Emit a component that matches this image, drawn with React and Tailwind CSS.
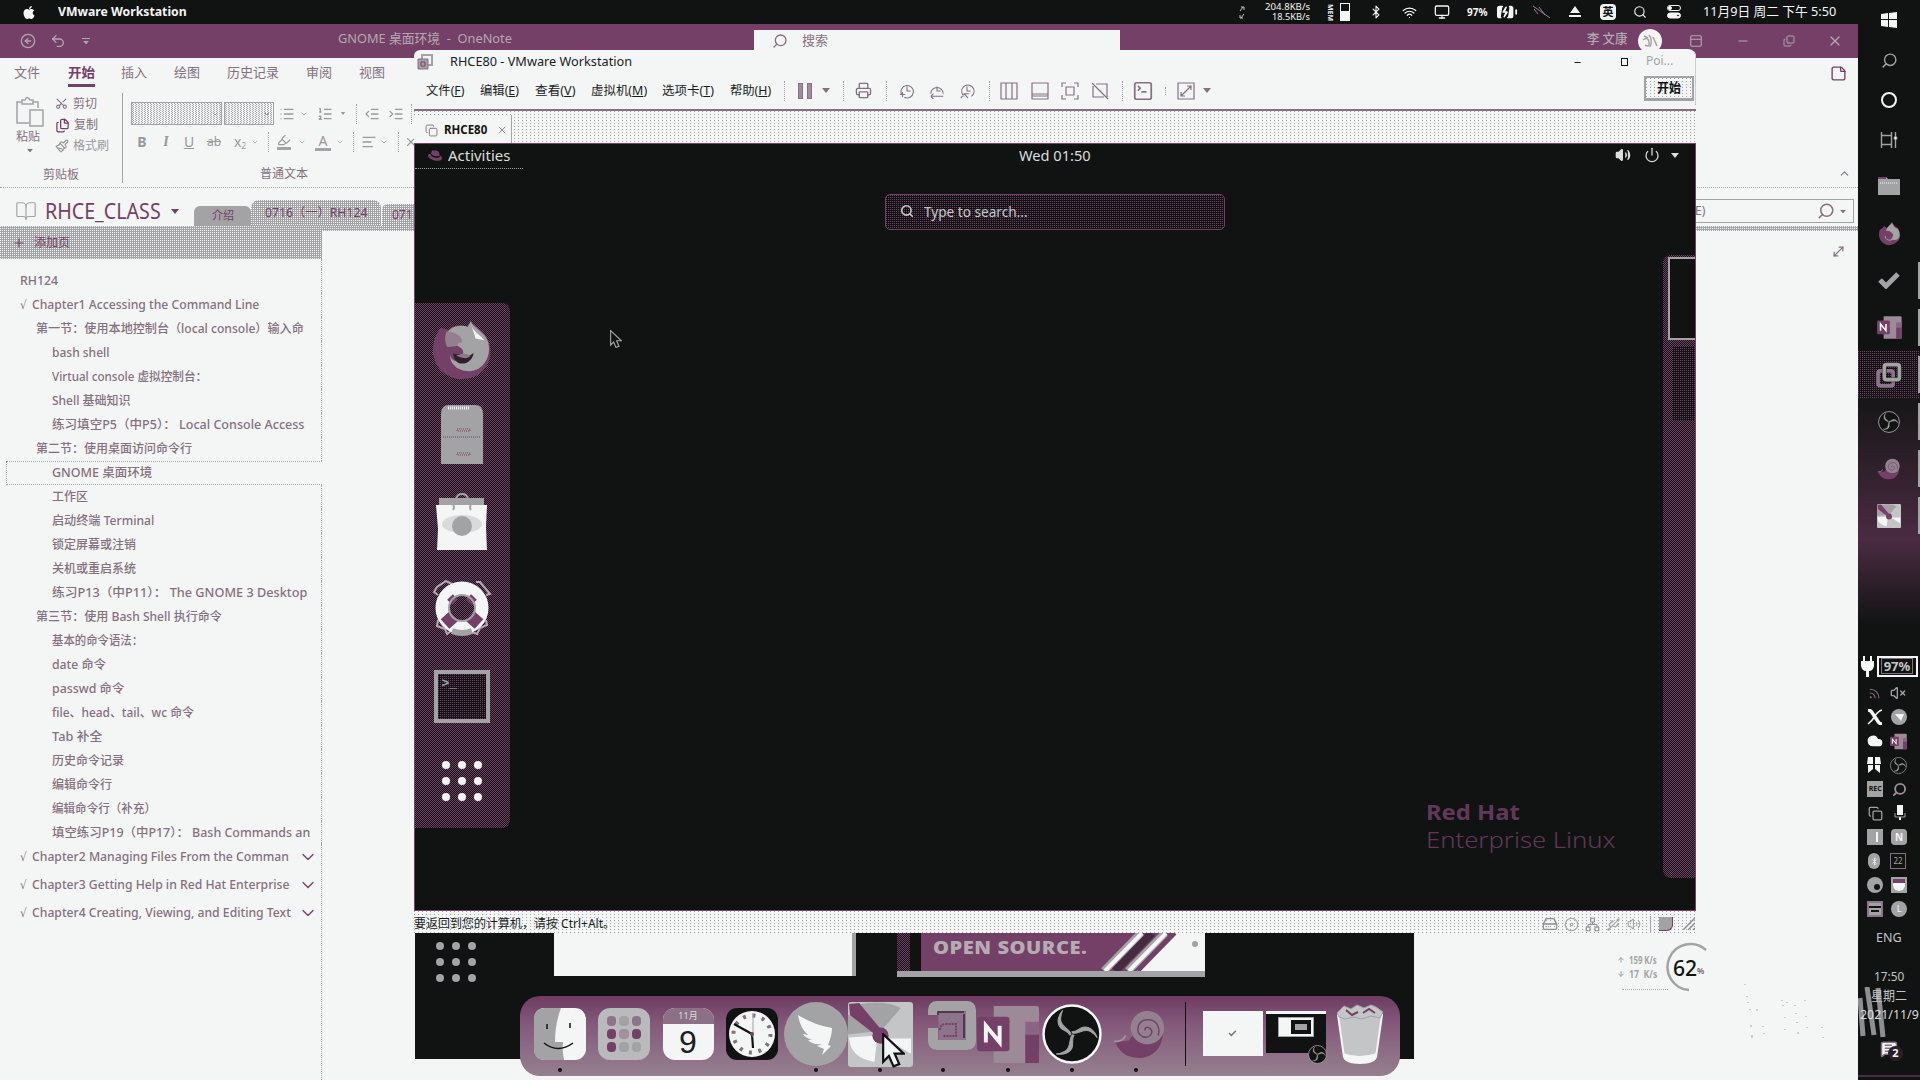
import React, { useLayoutEffect, useRef } from "react";
import {
  Search, Undo2, Scissors, Files, Paintbrush, Bluetooth, Wifi, Monitor, List, ListOrdered,
  IndentDecrease, IndentIncrease, AlignLeft, Highlighter, BookOpen, ChevronDown, ChevronUp, Plus, X,
  Minus, Copy, MoveDiagonal, Printer,
  SquareTerminal, Volume2, VolumeX, Power, Check, StickyNote, HardDrive, Disc, Network, Usb, Cloud,
  MessageSquareText, CircleArrowLeft, BatteryCharging, ArrowUp, ArrowDown, PanelTop, Rss,
} from "lucide-react";
import { FaApple, FaRedhat } from "react-icons/fa";

const lightDots = "bg-[#f4f6f5] bg-[conic-gradient(from_270deg_at_1px_1px,#a3a3a5_25%,transparent_0)] bg-size-[4px_3px]";
const fieldDots = "bg-[#f4f6f5] bg-[conic-gradient(from_270deg_at_1px_1px,#a3a3a5_25%,transparent_0),conic-gradient(from_270deg_at_1px_1px,#a3a3a5_25%,transparent_0)] bg-size-[3px_2px] bg-position-[0_0,1px_1px]";
const greyDots = "bg-[#a3a3a5] bg-[conic-gradient(from_270deg_at_1px_1px,#f4f6f5_25%,transparent_0)] bg-size-[2px_2px]";
const plumDots = "bg-[#101312] bg-[conic-gradient(from_270deg_at_1px_1px,#754067_25%,transparent_0),conic-gradient(from_270deg_at_1px_1px,#754067_25%,transparent_0)] bg-size-[2px_2px] bg-position-[0_0,1px_1px]";
const plumSparse = "bg-[#101312] bg-[conic-gradient(from_270deg_at_1px_1px,#754067_25%,transparent_0)] bg-size-[2px_2px]";

// Text squeezed or stretched horizontally to a known width.
function T({ w, children, className = "" }) {
  const inner = useRef(null);
  useLayoutEffect(() => {
    const el = inner.current;
    el.style.transform = `scaleX(${w / el.offsetWidth})`;
  }, [w]);
  return (
    <span className={`block shrink-0 whitespace-pre ${className}`} style={{ width: w }}>
      <span ref={inner} className="inline-block origin-left">{children}</span>
    </span>
  );
}

// A flex row whose cells are [centre, width, content].
function Row({ items, start = 0, className = "" }) {
  let x = start;
  return (
    <div className={`flex items-center ${className}`}>
      {items.map(([c, w, node], i) => {
        const ml = c - w / 2 - x;
        x = c + w / 2;
        return (
          <div key={i} className="flex shrink-0 items-center justify-center" style={{ width: w, marginLeft: ml }}>
            {node}
          </div>
        );
      })}
    </div>
  );
}

const txt = (a, b, s, cls = "") => [(a + b) / 2, b - a, <T w={b - a} className={cls}>{s}</T>];
const ic = (c, I, s = 16, cls = "") => [c, s, <I size={s} strokeWidth={1.9} className={`shrink-0 ${cls}`} />];
const svg = (c, s, d, cls = "text-[#857080]") => [c, s, <svg width={s} height={s} viewBox="0 0 18 18" fill="none" stroke="currentColor" strokeWidth="1.2" className={cls}><path d={d} /></svg>];
const Caret = ({ className = "" }) => (
  <svg width="8" height="5" viewBox="0 0 8 5" className={className} fill="currentColor"><path d="M0 0h8L4 5z" /></svg>
);
const Sep = ({ className = "h-5" }) => <i className={`block border-l border-dotted border-[#a3a3a5] ${className}`} />;

const Obs = ({ s, ring = "#f4f6f5" }) => (
  <svg width={s} height={s} viewBox="0 0 58 58">
    <circle cx="29" cy="29" r="27.5" fill="#101312" stroke={ring} strokeWidth="2.4" />
    {[0, 120, 240].map((r) => (
      <g key={r} transform={`rotate(${r} 29 29)`}>
        <path d="M28 29C27 24 18 22 18 15c0-4 1-7 2-9-5 6-6 13-2 17 3 3 7 3 9 7z" fill="#a3a3a5" stroke="#a3a3a5" />
      </g>
    ))}
  </svg>
);
const VmIcon = ({ s }) => (
  <svg width={s} height={s} viewBox="0 0 50 50" fill="none">
    <rect x="4" y="17" width="29" height="29" rx="4" stroke="#8c748a" strokeWidth="7" />
    <rect x="16" y="5" width="29" height="29" rx="4" stroke="#101312" strokeWidth="10" opacity=".55" />
    <rect x="16" y="5" width="29" height="29" rx="4" stroke="#a3a3a5" strokeWidth="7" />
  </svg>
);
const VmDockIcon = () => (
  <svg width="49" height="50" viewBox="0 0 49 50" fill="none">
    <path d="M10 14V12q0-2 2-2h24q2 0 2 2v27H11V28" fill="#8c748a" />
    <path d="M5 14V9q0-4 4-4h30q4 0 4 4v31q0 4-4 4H9q-4 0-4-4V27" stroke="#a3a3a5" strokeWidth="10" />
    <path d="M10 14V11h26M36 13v24" stroke="#3c2637" strokeWidth="1.5" />
    <path d="M12 29q0-6 6-6h10v12H15" stroke="#754067" strokeWidth="2" strokeDasharray="2 1" />
  </svg>
);
const OneNote = ({ s }) => (
  <svg width={s} height={s} viewBox="0 0 64 60">
    <path d="M17 1h43a3 3 0 0 1 3 3v52a3 3 0 0 1-3 3H17z" fill="#9c8a99" />
    <path d="M49 17h14v13H49z" fill="#8c6584" /><path d="M49 30h14v29H49z" fill="#754067" />
    <rect x="0" y="12" width="33" height="35" rx="3" fill="#754067" />
    <path d="M9 38V21l14 17V21" stroke="#f4f6f5" strokeWidth="4" fill="none" />
  </svg>
);
const Snail = ({ s }) => (
  <svg width={s} height={s} viewBox="0 0 56 52" fill="none">
    <path d="M3 34C9 47 18 50 29 50c15-1 25-14 22-30l-10 8-8 5q-4 2-8-2l-3-5-5 6z" fill="#754067" />
    <circle cx="36" cy="19" r="17" fill="#94818f" />
    <path d="M47 27c3-11-4-17-12-16-9 1-12 13-4 17 7 3 12-4 8-8-3-3-7 0-5 2" stroke="#754067" strokeWidth="1.5" />
    <path d="M2 33q8 1 12-6" stroke="#a0909d" strokeWidth="2" />
  </svg>
);
const Pinwheel = ({ s }) => (
  <svg width={s} height={s} viewBox="0 0 64 64">
    <rect width="64" height="64" rx="3" fill="#c4c5c6" />
    <path d="M12 2Q38-2 52 6L33 28z" fill="#a3a3a5" /><path d="M0 12v20l26-3z" fill="#a3a3a5" />
    <path d="M1 2l10-1 24 29-7 3L2 13z" fill="#754067" />
    <path d="M1 35l28-2-3 26q-24-4-25-24zM37 36h25v15z" fill="#f4f6f5" />
    <circle cx="32" cy="33" r="8" fill="#754067" />
  </svg>
);
const FoxGlobe = ({ s }) => (
  <svg width={s} height={s} viewBox="0 0 60 62" className="shrink-0">
    <path d="M8 8c-9 12-11 28-3 40 10 15 34 18 47 4C64 38 60 19 49 10L39 2l-3 5c-7-3-16-2-20 3z" fill="#754067" />
    <path d="M39 1l-3 6c-10-3-20 1-22 8 7 0 14 4 10 11 10 4 9 10 2 16-6 2-9-5-8-7-2 10 8 18 19 18 15 0 24-16 20-30C54 12 42 9 39 1z" fill="#a3a3a5" />
    <path d="M39 3c1 8 10 12 14 18l-9-2z" fill="#f4f6f5" />
    <path d="M21 34c5 3 8 0 13 2 4 2 6-1 8-2-1 7-6 11-12 11-5 0-9-4-9-11z" fill="#30202d" />
    <path d="M24 37q8-4 15 0-4 5-15 0z" fill="#8f7a8b" />
    <path d="M14 12c-2 5-2 12 1 16l8-1q3 0 3-3l4-1q0-6-5-8-4-3-11-3z" fill="#93808f" />
  </svg>
);
const Win = () => (
  <svg width="18" height="18" viewBox="0 0 18 18" fill="#f4f6f5"><path d="M1 3l7-1v6H1zM9 2l8-1v7H9zM1 9h7v7l-7-1zM9 9h8v8l-8-1z" /></svg>
);
const Pointer = ({ s, fill, stroke }) => (
  <svg width={s} height={s * 1.5} viewBox="0 0 20 30" fill={fill} stroke={stroke} strokeWidth="1.9"><path d="M1 1v24l5-5 4 9 5-2-4-9h8z" /></svg>
);

function MenuBar() {
  return (
    <Row
      className="h-6 w-[1858px] bg-[#101312] text-[13px] text-[#f4f6f5]"
      items={[
        [29, 14, <FaApple size={15} />],
        txt(58, 187, "VMware Workstation", "font-bold"),
        [1242, 6, <svg width="6" height="13" viewBox="0 0 6 13" stroke="#c4c5c6" fill="none"><path d="M1 5l3-4M2 1h3v3M5 8l-3 4M1 9v3h3" /></svg>],
        [1287, 46, <span className="flex w-full flex-col items-end text-[9px] leading-[10px]"><T w={45}>204.8KB/s</T><T w={38}>18.5KB/s</T></span>],
        [1331, 6, <span className="rotate-90 text-[7px] leading-none font-bold">MEM</span>],
        [1345, 10, <span className="flex h-[18px] w-[10px] flex-col justify-end border border-[#f4f6f5]"><i className="block h-[9px] bg-[#f4f6f5]" /></span>],
        ic(1376, Bluetooth, 14),
        ic(1409, Wifi, 15),
        ic(1442, Monitor, 16),
        txt(1467, 1488, "97%", "text-[11px] font-bold"),
        ic(1507, BatteryCharging, 22, "fill-[#f4f6f5]"),
        [1542, 18, <svg width="18" height="14" viewBox="0 0 18 14"><path d="M1 4l4 5M6 2l6 8M0 1l17 12" stroke="#a07e99" /></svg>],
        [1575, 12, <svg width="12" height="12" viewBox="0 0 12 12" fill="#f4f6f5"><path d="M6 0l5 7H1zM0 9h12v2H0z" /></svg>],
        [1608, 16, <span className="flex size-4 items-center justify-center rounded-sm bg-[#f4f6f5] text-[11px] font-bold text-[#101312]">英</span>],
        ic(1640, Search, 14),
        [1674, 14, <svg width="14" height="14" viewBox="0 0 14 14" fill="none" stroke="#f4f6f5"><rect x=".5" y=".5" width="13" height="5" rx="2.5" /><circle cx="3" cy="3" r="1.5" fill="#f4f6f5" /><rect x=".5" y="8" width="13" height="5" rx="2.5" fill="#f4f6f5" /><circle cx="11" cy="10.5" r="1.3" fill="#101312" /></svg>],
        txt(1703, 1836, "11月9日 周二 下午 5:50", "text-[13px]"),
      ]}
    />
  );
}

function Ribbon() {
  const g = "text-[#9a989b]";
  return (
    <div className="h-[130px] border-b border-dotted border-[#a3a3a5] bg-[#f4f6f5] text-[12px]">
      <Row className="h-[30px] text-[13px] text-[#857080]" items={[
        txt(14, 40, "文件"), txt(68, 95, "开始", "font-bold text-[#754067]"), txt(121, 147, "插入"), txt(174, 200, "绘图"),
        txt(227, 279, "历史记录"), txt(306, 332, "审阅"), txt(359, 385, "视图"), ic(1838, StickyNote, 17, "text-[#754067]"),
      ]} />
      <div className="-mt-1 ml-[68px] h-[3px] w-[27px] bg-[#754067]" />
      <div className="mt-1.5 flex h-[90px]">
        <div className="flex w-[55px] flex-col items-center pt-[3px] pl-[5px] text-[#857080]">
          <svg width="28" height="31" viewBox="0 0 28 31" fill="none" stroke="#a3a3a5" strokeWidth="1.5" className="shrink-0"><path d="M13 27H1V6h5M17 6h5v6M6 8V4h3q2-5 5 0h3v4z" /><path d="M14 14h13v16H14z" /></svg>
          <T w={24} className="mt-0.5 -ml-1 leading-[15px]">粘贴</T><Caret className="mt-1 scale-75" />
        </div>
        <div className="flex w-[68px] flex-col border-r border-[#a3a3a5] text-[#857080]">
          <div className="flex h-[22px] items-center gap-[5px]"><Scissors size={13} className="-rotate-90" /><T w={24}>剪切</T></div>
          <div className="flex h-[23px] items-center gap-[4px]"><Files size={15} className="text-[#754067]" /><T w={24}>复制</T></div>
          <div className={`flex h-[22px] items-center gap-[4px] ${g}`}><Paintbrush size={14} /><T w={36}>格式刷</T></div>
          <T w={36} className="mt-2.5 -ml-3 leading-4">剪贴板</T>
        </div>
        <div className={`flex flex-col pt-[9px] ${g}`}>
          <Row start={123} className="h-6" items={[
            [176.5, 91, <span className={`flex h-[23px] w-full items-center justify-end border border-[#a3a3a5] pr-0.5 ${fieldDots}`}><ChevronDown size={8} className="text-[#857080]" /></span>],
            [249, 50, <span className={`flex h-[23px] w-full items-center justify-end border border-[#a3a3a5] pr-0.5 ${fieldDots}`}><ChevronDown size={8} className="text-[#857080]" /></span>],
            ic(287, List), ic(304, ChevronDown, 8), ic(325, ListOrdered), [343, 6, <Caret className="scale-75" />], [356, 1, <Sep />],
            ic(372, IndentDecrease), ic(396, IndentIncrease), [411, 1, <Sep />],
          ]} />
          <Row start={123} className="mt-1.5 h-6 text-[14px]" items={[
            [142, 12, <b>B</b>], [166, 12, <i className="font-serif font-bold">I</i>], [189, 12, <u>U</u>], [214, 16, <s className="text-[12px]">ab</s>],
            [240, 14, <span>x<sub className="text-[8px]">2</sub></span>], ic(255, ChevronDown, 8), [268, 1, <Sep />],
            [284, 16, <span className="border-b-[3px] border-[#a3a3a5]"><Highlighter size={14} /></span>], ic(302, ChevronDown, 8),
            [323, 16, <span className="w-4 border-b-[3px] border-[#a3a3a5] text-center leading-[15px]">A</span>], ic(340, ChevronDown, 8), [353, 1, <Sep />],
            ic(369, AlignLeft), ic(384, ChevronDown, 8), [398, 1, <Sep />], ic(411, X, 14),
          ]} />
          <Row start={123} className="mt-[12px] h-5 text-[#857080]" items={[txt(260, 308, "普通文本"), ic(1844, ChevronUp, 13)]} />
        </div>
      </div>
    </div>
  );
}

const pages = [
  [0, 38, "RH124"], [0, 227, "Chapter1 Accessing the Command Line"], [1, 268, "第一节：使用本地控制台（local console）输入命"],
  [2, 58, "bash shell"], [2, 155, "Virtual console 虚拟控制台："], [2, 79, "Shell 基础知识"], [2, 252, "练习填空P5（中P5）： Local Console Access"],
  [1, 156, "第二节：使用桌面访问命令行"], [2, 100, "GNOME 桌面环境"], [2, 36, "工作区"], [2, 102, "启动终端 Terminal"],
  [2, 84, "锁定屏幕或注销"], [2, 84, "关机或重启系统"], [2, 255, "练习P13（中P11）： The GNOME 3 Desktop"],
  [1, 186, "第三节：使用 Bash Shell 执行命令"], [2, 91, "基本的命令语法："], [2, 54, "date 命令"], [2, 72, "passwd 命令"],
  [2, 142, "file、head、tail、wc 命令"], [2, 50, "Tab 补全"], [2, 72, "历史命令记录"], [2, 60, "编辑命令行"], [2, 104, "编辑命令行（补充）"],
  [2, 258, "填空练习P19（中P17）： Bash Commands an"],
];
const indent = ["pl-5", "pl-9", "pl-[52px]"];
const chapters = [[257, "Chapter2 Managing Files From the Comman"], [258, "Chapter3 Getting Help in Red Hat Enterprise"], [259, "Chapter4 Creating, Viewing, and Editing Text"]];
const Root = () => <T w={7} className="mr-[5px] font-['DejaVu_Sans']">√</T>;

function OneNoteWindow() {
  return (
    <div className="flex h-[1056px] w-[1858px] flex-col bg-[#f4f6f5]">
      <Row className="h-[34px] shrink-0 bg-[#754067] text-[12px] text-[#b3a8b1]" items={[
        ic(28, CircleArrowLeft), ic(58, Undo2), [86, 8, <span className="flex flex-col items-center gap-px"><i className="h-px w-2 bg-current" /><Caret className="scale-75" /></span>],
        txt(338, 512, "GNOME 桌面环境  -  OneNote", "-mt-1 text-[13px]"),
        [937, 366, <div className="mt-1.5 flex h-7 w-full items-center bg-[#f4f6f5] pb-1.5 pl-[18px] text-[#857080]"><Search size={16} className="-scale-x-100" /><T w={26} className="ml-[14px] text-[13px]">搜索</T></div>],
        txt(1587, 1627, "李 文康", "-mt-1 text-[13px] font-medium"),
        [1650, 24, <span className="flex size-6 items-center justify-center rounded-full bg-[#f4f6f5]"><svg width="18" height="18" viewBox="0 0 18 18" fill="none" stroke="#a3a3a5" strokeWidth="1.5"><path d="M2 8q5-4 6 2t-4 3M8 3q4 5 1 12M12 5l4 9M3 4l4 2" /></svg></span>],
        ic(1696, PanelTop, 14), ic(1743, Minus, 14), ic(1789, Copy, 12, "-scale-y-100"), ic(1835, X),
      ]} />
      <Ribbon />
      <div className="flex h-[38px] shrink-0 items-end text-[#754067]">
        <div className="flex h-full w-[194px] items-center gap-2 pt-2 pl-[15px]">
          <BookOpen size={22} strokeWidth={1.3} className="text-[#a3a3a5]" /><T w={116} className="text-[21px] leading-8">RHCE_CLASS</T><Caret className="ml-0.5" />
        </div>
        <div className="flex h-5 w-[57px] items-center justify-center rounded-t-md bg-[#a3a3a5] text-[12px]"><T w={22}>介绍</T></div>
        <div className={`flex h-[26px] w-[130px] items-center justify-center rounded-t-lg text-[12px] ${greyDots}`}><T w={102}>0716（一）RH124</T></div>
        <div className={`ml-px flex h-[22px] w-[34px] items-center rounded-tl-md pl-2.5 text-[12px] ${greyDots}`}>071</div>
        <div className="mr-1 mb-[3px] ml-auto flex h-6 w-[160px] items-center justify-end gap-1 border border-[#a3a3a5] pr-1.5 text-[#857080]">
          <span className="mr-auto text-[12px]">E)</span><Search size={18} className="-scale-x-100" /><Caret className="scale-75" />
        </div>
      </div>
      <div className="flex min-h-0 flex-1">
        <div className="flex w-[322px] flex-col">
          <div className={`flex h-[33px] shrink-0 items-center gap-2 pl-3 text-[12px] text-[#754067] ${greyDots}`}><Plus size={14} /><T w={36}>添加页</T></div>
          <div className="h-[10px] border-r border-dotted border-[#a3a3a5]" />
          {pages.map(([lv, w, s], i) => (
            <div key={i} className={`flex h-6 shrink-0 items-center text-[12px] font-medium text-[#85707f] ${i === 8 ? "ml-[6px] border-y border-l border-dotted border-[#a3a3a5] pl-[45px]" : `border-r border-dotted border-[#a3a3a5] ${indent[lv]}`}`}>
              {i === 1 && <Root />}
              <T w={w}>{s}</T>
            </div>
          ))}
          <div className="-mt-0.5 flex-1 border-r border-dotted border-[#a3a3a5] text-[12px] font-medium text-[#85707f]">
            {chapters.map(([w, s]) => (
              <div key={s} className="flex h-7 items-center pr-[3px] pl-5"><Root /><T w={w}>{s}</T><ChevronDown size={20} strokeWidth={1.6} className="ml-auto text-[#754067]" /></div>
            ))}
          </div>
        </div>
        <div className="flex-1">
          <div className={`h-[5px] ${greyDots}`} />
          <div className="flex justify-end pt-[13px] pr-3 text-[#857080]"><MoveDiagonal size={15} /></div>
        </div>
      </div>
    </div>
  );
}

const AppGrid = ({ className }) => (
  <div className={`grid grid-cols-3 ${className}`}>{Array.from({ length: 9 }, (_, i) => <i key={i} className="size-2 rounded-full bg-current" />)}</div>
);

function Guest() {
  return (
    <div className="relative flex h-[768px] flex-col border border-[#754067] bg-[#101312]">
      <Row start={415} className="h-6 shrink-0 pb-0.5 text-[14px] text-[#dcdddd]" items={[
        [435, 14, <FaRedhat size={15} className="text-[#754067]" />], txt(448, 510, "Activities"), txt(1019, 1091, "Wed 01:50"),
        ic(1623, Volume2, 16, "fill-current"), ic(1652, Power), [1675, 8, <Caret />],
      ]} />
      <i className="h-px w-[108px] border-b border-dotted border-[#a3a3a5]" />
      <div className={`mt-[25px] ml-[470px] flex h-9 w-[340px] shrink-0 items-center rounded-[5px] border border-[#754067] pb-0.5 pl-[14px] text-[14px] text-[#c8c8c9] ${plumSparse}`}>
        <Search size={14} strokeWidth={2.8} /><T w={104} className="ml-[10px]">Type to search...</T>
      </div>
      <div className="flex justify-between">
        <div className={`mt-[73px] flex h-[525px] w-[95px] flex-col items-center rounded-r-lg pt-[17px] pr-0.5 ${plumDots}`}>
          <FoxGlobe s={60} />
          <svg className="mt-[25px] shrink-0" width="42" height="59" viewBox="0 0 42 59"><path d="M0 59V9q0-9 8-9h26q8 0 8 9v50z" fill="#a3a3a5" /><path d="M2 32h38M16 24h13v2H16zM16 48h13v2H16z" stroke="#754067" strokeDasharray="1 1" fill="none" /><path d="M7 3h21" stroke="#f4f6f5" strokeWidth="3" strokeDasharray="1 1" /></svg>
          <svg className="mt-[29px] shrink-0" width="52" height="58" viewBox="0 0 52 58"><path d="M20 6q1-5 6-5t6 5" stroke="#a3a3a5" fill="none" strokeWidth="2" /><path d="M3 5h45v8H3z" fill="#a3a3a5" /><path d="M0 12h51l-1 22 1 23H1l1-21z" fill="#f4f6f5" /><ellipse cx="26" cy="31" rx="20" ry="9" fill="#d9dbdb" /><circle cx="26" cy="33" r="10" fill="#a3a3a5" /><path d="M17 17q2-3 0-5M35 17q-2-3 0-5" stroke="#a3a3a5" strokeWidth="2" /></svg>
          <svg className="mt-[29px] shrink-0" width="60" height="57" viewBox="0 0 60 57" fill="none">
            <path d="M6 15l-4-3L5 7 14 1l6 3M44 2l4 0 10 12-4 1M6 40l-1 6 8 3 2 5 4-3M54 40l1 5-7 3-3 6-5-2" stroke="#b9a9b6" strokeWidth="2" />
            <circle cx="30" cy="28" r="19.5" stroke="#f4f6f5" strokeWidth="14" />
            <path d="M18 17l5 5M42 17l-5 5" stroke="#754067" strokeWidth="8" /><path d="M13 44l9-8M47 44l-9-8" stroke="#754067" strokeWidth="13" />
            <path d="M20 51q10 4 20 0" stroke="#a3a3a5" strokeWidth="6" /><circle cx="30" cy="28" r="13" stroke="#a3a3a5" strokeWidth="2" />
          </svg>
          <div className={`mt-[33px] h-[53px] w-[56px] shrink-0 border-4 border-[#a3a3a5] pt-0.5 pl-1 font-mono text-[13px] leading-4 font-bold text-[#a3a3a5] ${plumSparse}`}>&gt;_</div>
          <AppGrid className="mt-[38px] gap-2 text-[#f4f6f5]" />
        </div>
        <div className={`mt-[25px] flex h-[623px] w-[32px] flex-col rounded-l-lg pt-[2px] ${plumDots}`}>
          <div className="ml-[5px] h-[83px] border-2 border-r-0 border-[#a3a3a5] bg-[#101312]" />
          <div className={`mt-[6px] ml-[9px] h-[75px] ${plumSparse}`} />
        </div>
      </div>
      <div className="absolute right-[79px] bottom-[57px] flex flex-col text-[22px] leading-7 text-[#61385a]">
        <T w={94} className="font-bold">Red Hat</T><T w={190} className="font-light">Enterprise Linux</T>
      </div>
      <div className="absolute top-[186px] left-[195px]"><Pointer s={12} fill="#101312" stroke="#a3a3a5" /></div>
    </div>
  );
}

function VmWindow() {
  const menu = (a, b, s, k) => txt(a, b, <>{s}(<u>{k}</u>)</>);
  return (
    <div className="flex h-[883px] w-[1282px] flex-col rounded-t-md bg-[#f4f6f5] text-[12px] text-[#201b1f]">
      <Row start={414} className="h-6 shrink-0 text-[13px]" items={[
        [425, 16, <svg width="16" height="16" viewBox="0 0 16 16" fill="none"><path d="M5 1h10v10H5z" stroke="#a3a3a5" strokeWidth="2" /><path d="M1 5h10v10H1z" fill="#a3a3a5" stroke="#857080" /><path d="M4 8h4v4H4z" stroke="#754067" /></svg>],
        txt(450, 632, "RHCE80 - VMware Workstation"),
        ic(1577, Minus, 9, "stroke-3"), [1624, 7, <span className="block h-[8px] w-[7px] border-[1.5px] border-[#101312]" />],
      ]} />
      <Row start={414} className="h-[35px] shrink-0 pb-0.5 text-[12px]" items={[
        menu(426, 464, "文件", "F"), menu(480, 519, "编辑", "E"), menu(535, 575, "查看", "V"), menu(591, 647, "虚拟机", "M"), menu(662, 714, "选项卡", "T"), menu(730, 771, "帮助", "H"),
        [784, 1, <Sep />], [805, 14, <span className="flex gap-1"><i className="h-4 w-[5px] border border-[#857080] bg-[#a08c9c]" /><i className="h-4 w-[5px] border border-[#857080] bg-[#a08c9c]" /></span>],
        [826, 8, <Caret className="text-[#857080]" />], [843, 1, <Sep />], ic(863, Printer, 17, "text-[#857080]"), [886, 1, <Sep />],
        svg(907, 16, "M3 13a7 7 0 1 1 3 3M9 4v5h4M1 13h6M4 10v6"), svg(937, 16, "M2 12a7 7 0 1 1 14 0M9 4v5h4M2 15h14M2 15l3-3M2 15l3 3"), svg(967, 16, "M6 15a7 7 0 1 1 8 0M9 4v5h4M6 12l4 5M2 17l4-5h5"), [989, 1, <Sep />],
        svg(1009, 18, "M1 1h16v16H1zM6 1v16M12 1v16"), svg(1040, 18, "M1 1h16v16H1zM1 12h16M1 14h16"), svg(1070, 18, "M1 5V1h4M13 1h4v4M17 13v4h-4M5 17H1v-4M5 5h8v8H5z"),
        svg(1100, 18, "M5 2h11v13M13 15H2V4M1 1l16 16"),
        [1122, 1, <Sep />], ic(1143, SquareTerminal, 22, "text-[#857080]"), [1165, 1, <Sep className="h-2" />], svg(1186, 18, "M1 1h16v16H1zM4 14L14 4M10 4h4v4M4 10v4h4"), [1207, 8, <Caret className="text-[#857080]" />],
      ]} />
      <div className={`flex h-[34px] shrink-0 border-t-2 border-[#857080] ${lightDots}`}>
        <div className="mt-1 flex w-[98px] items-center gap-1.5 border-r border-[#a3a3a5] bg-[#f4f6f5] pt-0.5 pl-[11px] font-bold text-[#101312]">
          <Copy size={13} strokeWidth={1.7} className="text-[#857080]" /><T w={43}>RHCE80</T><X size={12} strokeWidth={1.7} className="ml-[3px] text-[#857080]" />
        </div>
      </div>
      <Guest />
      <Row start={414} className={`h-[22px] shrink-0 pt-1 ${lightDots}`} items={[
        txt(414, 615, "要返回到您的计算机，请按 Ctrl+Alt。", "leading-4"),
        ic(1550, HardDrive, 16, "text-[#8f8f91]"), ic(1571, Disc, 15, "text-[#a3a3a5]"), ic(1592, Network, 15, "text-[#8f8f91]"), ic(1613, Usb, 15, "text-[#a3a3a5]"), ic(1634, Volume2, 14, "text-[#a3a3a5]"),
        [1650, 1, <i className="block h-4 w-px bg-[#a3a3a5]" />], [1666, 14, <i className="block size-3.5 rounded-br-md border-r border-b border-[#754067] bg-[#a3a3a5]" />],
        [1689, 12, <svg width="12" height="12" viewBox="0 0 12 12" stroke="#8f8f91" strokeWidth="1.5"><path d="M0 12L12 0M5 12l7-7M10 12l2-2" /></svg>],
      ]} />
    </div>
  );
}

function BackWindow() {
  return (
    <div className="flex h-[126px] w-[999px] items-start bg-[#101312]">
      <AppGrid className="mt-[9px] ml-[21px] gap-[8px] text-[#a3a3a5]" />
      <div className="ml-[78px] h-[43px] w-[302px] border-r-4 border-[#a3a3a5] bg-[#f4f6f5]" />
      <div className="ml-[41px] flex h-[44px] w-[308px] border-b-[6px] border-[#a3a3a5] bg-[#754067]">
        <i className={`h-full w-[13px] ${plumDots}`} /><i className="h-full w-[11px] bg-[#101312]" />
        <T w={154} className="ml-[12px] pt-px text-[17px] leading-7 font-black tracking-wide text-[#b5acb3]">OPEN SOURCE.</T>
        <svg className="ml-auto" width="104" height="38" viewBox="0 0 104 38"><path d="M36 38L72 0h32v38z" fill="#f4f6f5" /><path d="M3 38L40 0M27 38L64 0" stroke="#a3a3a5" strokeWidth="8" /><path d="M4 38L41 0M28 38L65 0" stroke="#f4f6f5" strokeWidth="4" /><path d="M14 38L51 0" stroke="#462a3f" strokeWidth="8" /><path d="M37 38L74 0" stroke="#754067" strokeWidth="4" /><circle cx="94" cy="11" r="3" fill="#a3a3a5" /></svg>
      </div>
    </div>
  );
}

function Dock() {
  const icons = [
    [560, 52, <svg width="52" height="52" viewBox="0 0 52 52"><rect width="52" height="52" rx="11" fill="#f4f6f5" /><path d="M27 0H11Q0 0 0 11v30q0 11 11 11h19q-2-9-1-18h-8Q21 16 27 0z" fill="#a3a3a5" /><path d="M13 16v5M36 15v5" stroke="#101312" strokeWidth="1.5" /><path d="M10 35q14 11 29 0" stroke="#101312" strokeWidth="1.5" fill="none" /></svg>],
    [624, 52, <div className="grid size-[52px] grid-cols-3 content-center justify-center gap-[3px] rounded-xl bg-[#b9babb] px-[9px]">{["bg-[#8c748a]", "bg-[#a3a3a5]", "bg-[#8c748a]", "bg-[#754067]", "bg-[#a3909f]", "bg-[#754067]", "bg-[#754067]", "bg-[#a3a3a5]", "bg-[#a3a3a5]"].map((c, i) => <i key={i} className={`h-[10px] rounded-sm ${c}`} />)}</div>],
    [688, 52, <div className="flex h-[52px] w-[51px] flex-col items-center rounded-xl bg-[#f4f6f5]"><span className="h-4 w-full rounded-t-xl bg-[#8c7086] text-center text-[9px] leading-4 text-[#dcdddd]">11月</span><span className="font-['Liberation_Sans'] text-[32px] leading-[36px] text-[#201b1f]">9</span></div>],
    [752, 52, <svg width="52" height="52" viewBox="0 0 52 52"><rect width="52" height="52" rx="11" fill="#101312" /><circle cx="26" cy="26" r="23" fill="#f4f6f5" /><circle cx="26" cy="26" r="18.5" fill="none" stroke="#857080" strokeWidth="4" strokeDasharray="3 6.68" /><path d="M26 26L8 16M26 26l1 14" stroke="#101312" strokeWidth="2.2" /><path d="M27 5v24" stroke="#a3a3a5" /><circle cx="26" cy="26" r="2" fill="#754067" /></svg>],
    [816, 64, <svg width="64" height="64" viewBox="0 0 64 64"><circle cx="32" cy="32" r="32" fill="#a3a3a5" /><path d="M14 13q16 10 34 13 0 7-4 17l3 1-9 9 2-6-7-3 5-2q-10 1-14-4l4 0q-8-3-9-6l5 1q-8-7-10-20z" fill="#f4f6f5" /></svg>],
    [880.5, 65, <Pinwheel s={65} />],
    [952, 49, <div className="-mt-4"><VmDockIcon /></div>],
    [1008, 64, <OneNote s={63} />],
    [1072, 60, <Obs s={60} />],
    [1139, 56, <Snail s={55} />],
    [1185, 1, <i className="block h-[64px] w-px bg-[#101312]" />],
    [1232.5, 60, <div className="-mt-0.5 flex h-[45px] w-[60px] items-center justify-center bg-[#f4f6f5]"><Check size={9} strokeWidth={4} className="text-[#857080]" /></div>],
    [1296, 60, <div className="relative -mt-1 flex h-[42px] w-[60px] justify-center border-t-[3px] border-[#f4f6f5] bg-[#101312] pt-[3px]"><div className="flex h-5 w-[36px] justify-end border border-[#a3a3a5] bg-[#f4f6f5] p-0.5"><i className="h-3.5 w-[20px] border-4 border-[#101312] bg-[#a3a3a5]" /></div><div className="absolute -right-px -bottom-[11px]"><Obs s={19} ring="#a3a3a5" /></div></div>],
    [1360, 46, <svg width="46" height="60" viewBox="0 0 46 60"><path d="M1 11l6 42q2 6 16 6t16-6l6-42z" fill="#c4c5c6" stroke="#f4f6f5" strokeWidth="2" /><path d="M6 49q16 6 34 0l-1 5q-2 5-16 5T7 54z" fill="#f4f6f5" /><path d="M0 9L7 2l7 3 6-4 7 3 7-3 5 2 7 5-3 6-9-2-9 3-8-2-9 2-6-2z" fill="#c4c5c6" stroke="#a3a3a5" /><path d="M9 6l6 5 6-3M26 9l6-4 6 4" stroke="#754067" fill="none" strokeWidth="2" /></svg>],
  ];
  const dot = (c) => [c, 4, <i className="block size-1 rounded-full bg-[#101312]" />];
  return (
    <div className="flex h-[80px] w-[880px] flex-col rounded-[20px] bg-linear-to-b from-[#6d3c60] via-[#84597b] via-35% to-[#95808f]">
      <Row start={520} className="h-[76px] shrink-0" items={icons} />
      <Row start={520} className="-mt-1 h-1" items={[560, 816, 880, 943, 1008, 1072, 1136].map(dot)} />
    </div>
  );
}

const Tile = ({ className = "", children }) => <span className={`flex size-4 items-center justify-center ${className}`}>{children}</span>;

function SideBar() {
  const apps = [
    [<Win />, 40, ""], [<Search size={17} className="-scale-x-100 text-[#a3a3a5]" />, 40, ""],
    [<i className="block size-4 rounded-full border-2 border-[#f4f6f5]" />, 40, ""],
    [<svg width="18" height="16" viewBox="0 0 18 16" fill="none" stroke="#a3a3a5"><path d="M1.5 0v16M11.5 0v16M1 3.5h10M1 12.5h10M15.5 0v16" strokeWidth="1.4" /><circle cx="15.5" cy="6" r="1.5" fill="#f4f6f5" /></svg>, 40, ""],
    [<svg width="22" height="18" viewBox="0 0 22 18"><path d="M0 0h8l2 2h12v16H0z" fill="#a3a3a5" /><path d="M2 6h18" stroke="#f4f6f5" strokeDasharray="1 1" /><path d="M0 1h8" stroke="#754067" strokeWidth="2" /></svg>, 51, ""],
    [<svg width="23" height="24" viewBox="0 0 23 24"><path d="M2 7q2 1 4-3l3 2 5-6q2 4 6 6 5 9-1 14-7 6-14 1-6-5-3-14z" fill="#754067" /><path d="M9 6l5-5q2 5 6 6 3 6 0 10-4 2-7 0 4-3 1-6t-6-2z" fill="#a3a3a5" /><path d="M7 14q1 5 6 4 4-1 2-4" stroke="#a3a3a5" fill="none" /></svg>, 45, ""],
    [<svg width="22" height="18" viewBox="0 0 22 18"><path d="M2 9l6 6L20 3" stroke="#a3a3a5" strokeWidth="5" fill="none" /></svg>, 48, "i"],
    [<OneNote s={25} />, 47, "i"], [<VmIcon s={26} />, 47, "a"], [<Obs s={22} ring="#a3a3a5" />, 47, "i"], [<Snail s={24} />, 47, "i"], [<Pinwheel s={24} />, 47, "i"],
  ];
  const tray = [
    [<Rss size={13} className="text-[#857080]" />, <VolumeX size={16} className="text-[#a3a3a5]" />],
    [<svg width="16" height="16" viewBox="0 0 16 16" fill="none" stroke="#f4f6f5"><path d="M1 1q3 0 5 4l4 6q2 4 5 4" strokeWidth="3.5" /><path d="M15 1q-4 1-7 6T1 15" strokeWidth="1.5" /></svg>, <Tile className="rounded-full bg-[#a3a3a5]"><svg width="9" height="9" viewBox="0 0 9 9" fill="#f4f6f5"><path d="M0 1h9L6 8z" /></svg></Tile>],
    [<Cloud size={16} fill="currentColor" />, <OneNote s={17} />],
    [<svg width="14" height="16" viewBox="0 0 14 16" fill="#f4f6f5"><path d="M1 0h5v7H0zM8 0h5l1 7H8zM1 8h5v4l-5 4zM8 8h5v8l-5-4z" /></svg>, <Obs s={17} ring="#a3a3a5" />],
    [<Tile className="bg-[#a3a3a5] text-[7px] font-bold text-[#101312]">REC</Tile>, <Search size={15} strokeWidth={3} className="-scale-x-100 text-[#a08c9c]" />],
    [<Copy size={15} className="text-[#a3a3a5]" />, <svg width="12" height="16" viewBox="0 0 12 16" fill="#f4f6f5"><path d="M3 0h6v10H3zM5 12h2v3H5z" /><path d="M1 8v4h10V8" stroke="#a3a3a5" fill="none" /></svg>],
    [<Tile className="justify-end border border-[#a3a3a5] bg-[#a3a3a5]"><i className="mr-1 h-2.5 w-0.5 bg-[#f4f6f5]" /></Tile>, <Tile className="rounded bg-[#a3a3a5] text-[10px] font-bold">N</Tile>],
    [<Tile className="w-3 rounded-full bg-[#a3a3a5]"><Bluetooth size={9} /></Tile>, <Tile className="border border-[#857080] text-[8px] text-[#a3a3a5]">22</Tile>],
    [<Tile className="rounded-full bg-[#a3a3a5]"><i className="mt-1 ml-1 size-1.5 rounded-full bg-[#101312]" /></Tile>, <Tile className="bg-[#a3a3a5]"><i className="size-3 rounded-b-full border-t-4 border-[#754067] bg-[#f4f6f5]" /></Tile>],
    [<Tile className="flex-col gap-0.5 border-2 border-[#8c748a] bg-[#a3a3a5]"><i className="h-0.5 w-full bg-[#101312]" /><i className="h-0.5 w-2 bg-[#101312]" /></Tile>, <Tile className="rounded-full bg-[#a3a3a5] text-[9px]">L</Tile>],
  ];
  return (
    <div className="flex h-[1080px] w-[62px] flex-col items-center bg-linear-to-b from-[#101312] from-35% via-[#4a2b42] via-50% to-[#101312] to-58% text-[#f4f6f5]">
      {apps.map(([n, h, m], i) => (
        <div key={i} className={`relative flex w-full shrink-0 items-center justify-center ${m === "a" ? plumSparse : ""}`} style={{ height: h }}>
          {n}
          {m && <i className="absolute right-0 h-[37px] w-0.5 bg-[#a3a3a5]" />}
        </div>
      ))}
      <div className="mt-[116px] flex h-[22px] items-center gap-[3px]">
        <svg width="13" height="21" viewBox="0 0 13 21" fill="#f4f6f5"><path d="M2 0h2v5H2zM9 0h2v5H9zM0 5h13v5q-1 5-5 5v6H5v-6q-4 0-5-5z" /></svg>
        <div className="flex h-[21px] w-[41px] items-center justify-center border-2 border-[#f4f6f5] text-[13px] font-bold text-[#c4c5c6]"><span className="border border-[#857080] px-0.5 leading-3.5">97%</span></div>
      </div>
      <div className="mt-[4px] mr-1 flex flex-col">
        {tray.map(([a, b], i) => <div key={i} className="flex h-6 w-12 items-center justify-around">{a}{b}</div>)}
      </div>
      <T w={26} className="mt-[6px] text-[13px] leading-5 text-[#c4c5c6]">ENG</T>
      <div className="relative mt-[20px] flex w-full flex-col items-center text-[13px] leading-[19px] text-[#c4c5c6]">
        <svg className="absolute top-5 left-0" width="28" height="51" viewBox="0 0 28 51" stroke="#8f8f91" strokeWidth="5"><path d="M2 11l3 38M9 0l7 48M20 1l5 49" /></svg>
        <T w={30} className="relative">17:50</T><T w={36} className="relative">星期二</T><T w={59} className="relative text-[#dcdddd]">2021/11/9</T>
      </div>
      <div className="relative mt-[16px]">
        <MessageSquareText size={18} fill="#f4f6f5" stroke="#857080" />
        <span className="absolute top-1.5 left-2 flex size-[15px] items-center justify-center rounded-full bg-[#2c1e29] text-[11px] font-bold">2</span>
      </div>
      <i className="mt-auto mb-[3px] h-0.5 w-full bg-[#4a2b42]" />
    </div>
  );
}

export default function App() {
  return (
    <div className="relative h-[1080px] w-[1920px] overflow-hidden bg-[#f4f6f5] font-['Noto_Sans','Noto_Sans_CJK_SC',sans-serif]">
      <div className="flex">
        <div className="flex flex-col"><MenuBar /><OneNoteWindow /></div>
        <SideBar />
      </div>
      <div className="absolute top-[933px] left-[415px]"><BackWindow /></div>
      <div className="absolute top-[50px] left-[414px]"><VmWindow /></div>
      <div className="absolute top-[49px] left-[1642px] flex h-[56px] w-[54px] flex-col items-center rounded-tr-lg border-r border-dotted border-[#a3a3a5] bg-[#f4f6f5]">
        <span className="w-full pl-1 text-[12px] leading-[24px] text-[#a3a3a5]">Poi...</span>
        <div className={`mt-[3px] flex h-[25px] w-[50px] items-center justify-center border-2 border-b-[3px] border-[#a3a3a5] text-[13px] font-bold text-[#101312] ${lightDots}`}><T w={24}>开始</T></div>
      </div>
      <div className="absolute top-[942px] left-[1617px] flex items-center text-[10px] leading-[14px] text-[#a3a3a5]">
        <div className="flex w-[47px] flex-col">
          <span className="flex items-center gap-1"><ArrowUp size={8} strokeWidth={3} /><T w={28} className="font-bold">159 K/s</T></span>
          <span className="flex items-center gap-1"><ArrowDown size={8} strokeWidth={3} /><T w={28} className="font-bold">17  K/s</T></span>
        </div>
        <div className="relative flex h-[50px] w-[50px] items-center">
          <svg className="absolute inset-0" width="50" height="50" viewBox="0 0 50 50" fill="none" stroke="#a3a3a5" strokeWidth="2.5"><path d="M42 8A23 23 0 1 0 25 48" /></svg>
          <T w={24} className="ml-[9px] text-[22px] leading-7 font-medium text-[#101312]">62</T><span className="mt-2 text-[8px] font-bold text-[#857080]">%</span>
        </div>
      </div>
      <i className="absolute top-[989px] left-[1622px] w-[46px] border-t border-dotted border-[#a3a3a5]" />
      <svg className="absolute top-[980px] left-[1740px]" width="90" height="60" viewBox="0 0 90 60" fill="none" stroke="#a3a3a5"><path d="M5 4v1M7 16v1M8 22v1M10 29v1M17 29v2M11 45v2M12 55v3M23 46v1M24 53v1M42 20v1M43 25v1M47 22v1M45 37v1M45 49v1M55 25v1M56 33v1M57 42v1M58 52v2M65 20v1M66 36v1M67 47v1M82 47v1M83 57v1" /></svg>
      <div className="absolute top-[996px] left-[520px]"><Dock /></div>
      <div className="absolute top-[1033px] left-[882px]"><Pointer s={23} fill="#f4f6f5" stroke="#101312" /></div>
    </div>
  );
}
